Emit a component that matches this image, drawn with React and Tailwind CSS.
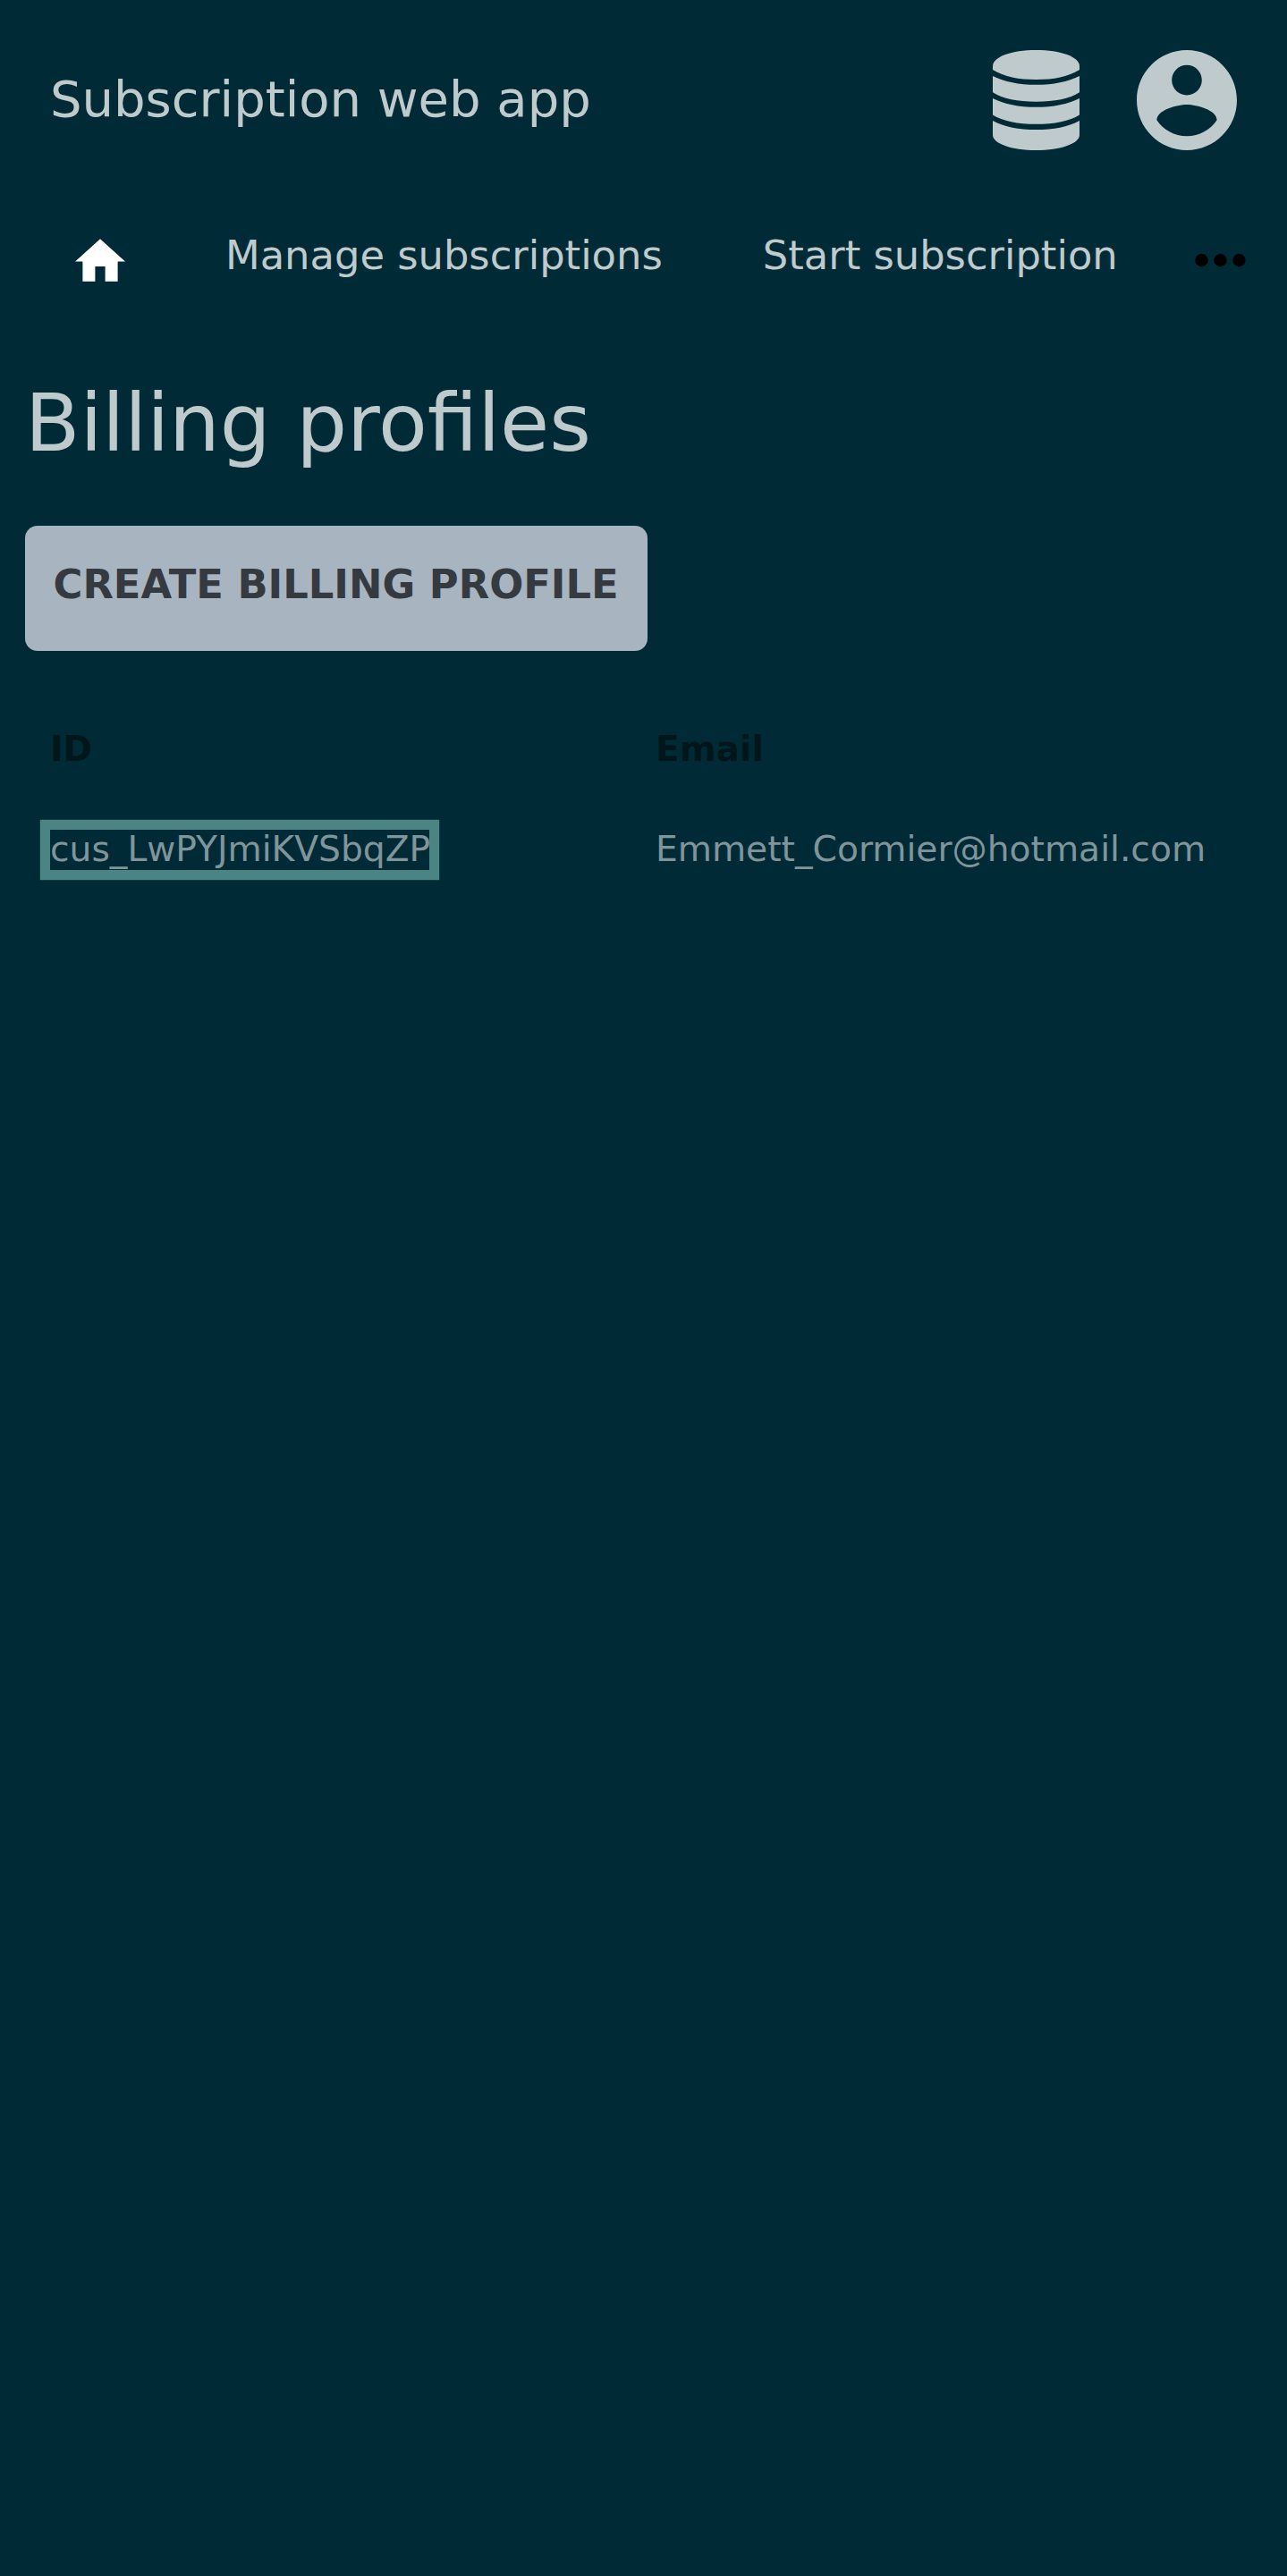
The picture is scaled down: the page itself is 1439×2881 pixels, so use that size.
import React from "react";

const Database = () => (
  <svg viewBox="0 0 97 112" className="h-[112px] w-[97px]" fill="#bfcacd">
    <path d="M0 18C0 7.500 21 0 48.500 0S97 7.500 97 18V22C84 30 68 33 48.500 33S13 30 0 22Z" />
    <path d="M0 29C13 35.500 29 38.800 48.500 38.800S84 35.500 97 29V47.300C86 54.500 69 57.800 48.500 57.800S11 54.500 0 47.300Z" />
    <path d="M0 54C13 60.500 29 63.800 48.500 63.800S84 60.500 97 54V72.500C86 79.500 69 82.800 48.500 82.800S11 79.500 0 72.500Z" />
    <path d="M0 79C13 86 29 89.100 48.500 89.100S84 86 97 79V95C97 104.500 76 112 48.500 112S0 104.500 0 95Z" />
  </svg>
);

const Account = () => (
  <svg viewBox="2 2 20 20" className="size-[112px]" fill="#bfcacd">
    <path d="M12 2C6.480 2 2 6.480 2 12s4.480 10 10 10 10-4.480 10-10S17.520 2 12 2zm0 3c1.660 0 3 1.340 3 3s-1.340 3-3 3-3-1.340-3-3 1.340-3 3-3zm0 14.200c-2.500 0-4.710-1.280-6-3.220.03-1.990 4-3.080 6-3.080 1.990 0 5.970 1.090 6 3.080-1.290 1.940-3.500 3.220-6 3.220z" />
  </svg>
);

export default function App() {
  return (
    <div className="h-[2881px] w-full overflow-hidden bg-[#002b36] font-['DejaVu_Sans',sans-serif] text-[#bfcacd]">
      <header className="flex h-[224px] items-center justify-between px-14">
        <span className="mb-[3px] text-[56px] leading-[84px]">Subscription web app</span>
        <div className="flex items-center gap-[64px]">
          <Database />
          <Account />
        </div>
      </header>
      <nav className="flex h-[123px] items-center">
        <svg viewBox="2 3 20 17" className="mt-[10px] ml-[84px] h-[48px] w-[56px]" fill="#fff">
          <path d="M10 20v-6h4v6h5v-8h3L12 3 2 12h3v8z" />
        </svg>
        <span className="ml-[112px] text-[44.8px] whitespace-nowrap">Manage subscriptions</span>
        <span className="ml-[112px] text-[44.8px] whitespace-nowrap">Start subscription</span>
        <svg viewBox="0 0 58 18" className="mt-[10px] mr-[45px] ml-auto h-[18px] w-[58px]">
          <circle cx="7.500" cy="9" r="7.200" />
          <circle cx="28.500" cy="9" r="7.200" />
          <circle cx="49.500" cy="9" r="7.200" />
        </svg>
      </nav>
      <main className="px-7">
        <h1 className="mt-[72px] text-[89.6px] leading-[108px]">Billing profiles</h1>
        <button className="mt-[61px] flex h-[140px] w-[696.3px] rounded-[14px] bg-[#a8b4c0] pt-[32px] pl-[31.5px] text-[44.8px] leading-[67px] font-bold whitespace-nowrap text-[#343a40]">
          CREATE BILLING PROFILE
        </button>
        <div className="mt-[56px] grid grid-cols-[677px_1fr] text-[39.2px] leading-[57px]">
          <div className="px-7 pt-[25px] font-bold text-[#00161b]">ID</div>
          <div className="px-7 pt-[25px] font-bold text-[#00161b]">Email</div>
          <div className="px-7 pt-[62px] text-[#80959b]">
            <a className="block h-[45px] w-[424px] leading-[43px] shadow-[0_0_0_11.2px_#4a8583]">cus_LwPYJmiKVSbqZP</a>
          </div>
          <div className="px-7 pt-[61px] leading-[45px] text-[#80959b]">Emmett_Cormier@hotmail.com</div>
        </div>
      </main>
    </div>
  );
}
